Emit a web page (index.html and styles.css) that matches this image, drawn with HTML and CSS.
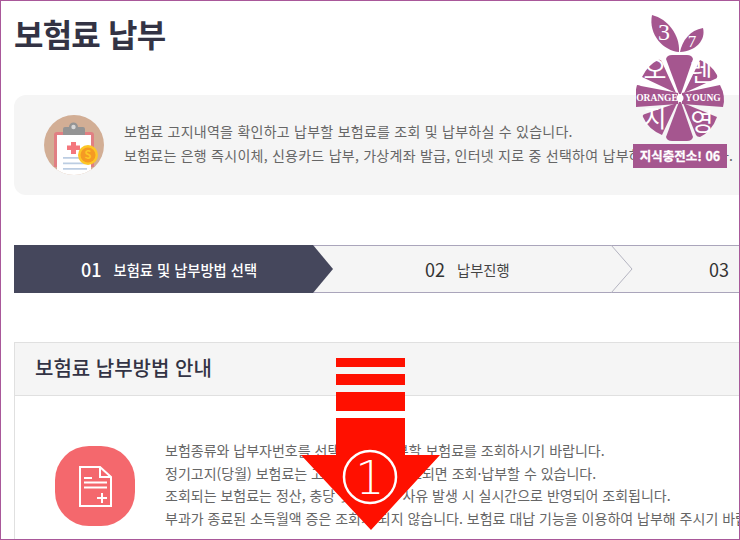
FILE: index.html
```html
<!DOCTYPE html>
<html lang="ko">
<head>
  <meta charset="UTF-8" />
  <title>보험료 납부</title>
  <link rel="stylesheet" href="styles.css">
</head>
<body>
  <div class="frame">
    <h1 class="page-title">보험료 납부</h1>

    <div class="intro">
      <svg class="intro-icon" width="60" height="60" viewBox="0 0 60 60">
        <clipPath id="disc"><circle cx="30" cy="30" r="30"/></clipPath>
        <circle cx="30" cy="30" r="30" fill="#d2ae95"/>
        <g clip-path="url(#disc)">
          <path d="M10 52V20a3 3 0 0 1 3-3h34a3 3 0 0 1 3 3v32z" fill="#e17f83"/>
          <rect x="13" y="20" width="34" height="42" fill="#fff"/>
        </g>
        <path d="M19 20v-6a2 2 0 0 1 2-2h4a4.500 4.500 0 0 1 9 0h5a2 2 0 0 1 2 2v6z" fill="#949494"/>
        <circle cx="29.500" cy="12" r="2.200" fill="#d8d8d8"/>
        <path d="M27 27h5v3.500h4v4.500h-4v4h-5v-4h-4v-4.500h4z" fill="#f4777d"/>
        <path d="M19 42h20v1.800H19zM19 47.500h24v1.800H19zM19 53h24v1.800H19z" fill="#bccde2"/>
        <circle cx="44" cy="40" r="10" fill="#fdc726"/>
        <circle cx="44" cy="40" r="7.500" fill="#f59a23"/>
        <text class="coin" x="44" y="44" text-anchor="middle">S</text>
      </svg>
      <div class="intro-text">
        <p>보험료 고지내역을 확인하고 납부할 보험료를 조회 및 납부하실 수 있습니다.</p>
        <p>보험료는 은행 즉시이체, 신용카드 납부, 가상계좌 발급, 인터넷 지로 중 선택하여 납부하실 수 있습니다.</p>
      </div>
    </div>

    <div class="steps">
      <div class="step step-on"><b>01</b><span>보험료 및 납부방법 선택</span></div>
      <svg class="step-tip" width="20" height="48" viewBox="0 0 20 48"><polygon points="0,0 20,24 0,48" fill="#45475c"/></svg>
      <div class="step step-two"><b>02</b><span>납부진행</span></div>
      <svg class="step-tip" width="22" height="48" viewBox="0 0 22 48"><polyline points="0,0 21,24 0,48" fill="none" stroke="#b4b4c0"/></svg>
      <div class="step step-three"><b>03</b></div>
    </div>

    <div class="card">
      <h2 class="card-head">보험료 납부방법 안내</h2>
      <div class="card-body">
        <div class="doc-badge">
          <svg width="33" height="41" viewBox="0 0 33 41" fill="none" stroke="#fff" stroke-width="2">
            <path d="M1 1h20l11 10v29H1z"/>
            <path d="M21 1v10h11"/>
            <path d="M5 12h8M5 16.500h23M5 21.500h23M18 32h10M23 27v10"/>
          </svg>
        </div>
        <div class="card-text">
          <p>보험종류와 납부자번호를 선택하시고 납부할 보험료를 조회하시기 바랍니다.</p>
          <p>정기고지(당월) 보험료는 고지서가 발송 완료되면 조회·납부할 수 있습니다.</p>
          <p>조회되는 보험료는 정산, 충당 및 환불 등 사유 발생 시 실시간으로 반영되어 조회됩니다.</p>
          <p>부과가 종료된 소득월액 증은 조회가 되지 않습니다. 보험료 대납 기능을 이용하여 납부해 주시기 바랍니다.</p>
        </div>
      </div>
    </div>

    <svg class="logo" width="100" height="130" viewBox="0 0 100 130">
      <g fill="#a5568f">
        <path d="M16 0C32 4 44 20 43 37C28 36 12 20 16 0z"/>
        <path d="M67 13C70 25 60 36 44 37C46 26 54 15 67 13z"/>
        <path d="M30 44Q31 40 36 40H51Q56 40 57 44L45 79H43z"/>
        <path d="M64 45Q76 50 81 60Q82 63 79 64L48 78z"/>
        <path d="M84 70Q90 81 87 92L46 89V78z"/>
        <path d="M81 102Q76 116 64 122Q61 122 60 120L47 88z"/>
        <path d="M57 122Q56 126 51 126H36Q31 126 30 122L43 87H45z"/>
        <path d="M26 120Q12 114 7 102Q6 100 9 99L41 88z"/>
        <path d="M0 92Q-2 81 1 70Q3 70 5 71L42 78V89z"/>
        <path d="M6 62Q12 50 22 45Q25 44 26 47L40 78z"/>
      </g>
      <g class="logo-kr" fill="#fff" text-anchor="middle">
        <text class="logo-num" x="28" y="25">3</text>
        <text class="logo-num small" x="56" y="32">7</text>
        <text x="19" y="64">오</text>
        <text x="65" y="66">렌</text>
        <text x="19" y="112">지</text>
        <text x="66" y="116">영</text>
      </g>
      <circle cx="44" cy="83" r="3.500" fill="#fff"/>
      <text class="logo-en" x="21" y="86" text-anchor="middle">ORANGE</text>
      <text class="logo-en" x="67" y="86" text-anchor="middle">YOUNG</text>
    </svg>
    <div class="logo-tag">지식충전소! 06</div>

    <svg class="arrow" width="144" height="176" viewBox="0 0 144 176">
      <g fill="#ff1000">
        <path d="M37 0h69v9H37zM37 16h69v11H37zM37 34h69v19H37z"/>
        <path d="M37 60h69v37h35L72 172L2 97h35z"/>
      </g>
      <circle cx="71" cy="119" r="26" fill="none" stroke="#fff" stroke-width="2.500"/>
      <text class="arrow-num" x="71" y="136" text-anchor="middle">1</text>
    </svg>
  </div>
</body>
</html>
```

FILE: styles.css
```css
* { box-sizing: border-box; margin: 0; padding: 0; }
html, body {
  width: 100%;
  height: 100%;
  background: #fff;
  font-family: "Noto Sans CJK KR", "Noto Sans", sans-serif;
  color: #666;
}
.frame {
  position: relative;
  width: 740px;
  height: 540px;
  border: 1px solid #a9589a;
  padding: 0 0 0 13px;
  overflow: hidden;
}
.page-title {
  height: 94px;
  padding-top: 9px;
  font-size: 32px;
  line-height: 46px;
  font-weight: 700;
  letter-spacing: -0.8px;
  color: #333344;
}
.intro {
  display: flex;
  align-items: center;
  gap: 20px;
  width: 760px;
  height: 100px;
  padding-left: 30px;
  background: #f5f5f5;
  border-radius: 12px;
}
.intro-icon { flex: none; }
.intro-text {
  padding-bottom: 4px;
  font-size: 14px;
  line-height: 24px;
  letter-spacing: 0.25px;
  white-space: nowrap;
}
.coin { font-size: 11px; font-weight: 700; fill: #fdc726; }

.steps {
  display: flex;
  width: 740px;
  height: 48px;
  margin-top: 50px;
  background: #f5f5f5;
  border-top: 1px solid #aaa5bb;
  border-bottom: 1px solid #aaa5bb;
}
.step {
  display: flex;
  align-items: center;
  flex: none;
  gap: 12px;
  height: 46px;
  font-size: 14.300px;
  color: #444;
  white-space: nowrap;
}
.step b { font-size: 18px; font-weight: 400; color: #333; }
.step-on {
  width: 299px;
  height: 48px;
  margin-top: -1px;
  padding-left: 67px;
  background: #45475c;
  color: #fff;
  font-weight: 500;
}
.step-on b { color: #fff; font-weight: 500; }
.step-tip { flex: none; margin-top: -1px; }
.step-two { width: 278px; padding-left: 92px; }
.step-three { padding-left: 76px; }

.card {
  width: 760px;
  height: 300px;
  margin-top: 49px;
  border: 1px solid #e0e0e0;
}
.card-head {
  height: 53px;
  padding-left: 20px;
  background: #f5f5f5;
  border-bottom: 1px solid #e0e0e0;
  font-size: 20px;
  line-height: 50px;
  font-weight: 500;
  color: #333344;
}
.card-body {
  display: flex;
  gap: 30px;
  padding: 43px 0 0 40px;
}
.doc-badge {
  display: flex;
  align-items: center;
  justify-content: center;
  flex: none;
  width: 80px;
  height: 80px;
  margin-top: 7px;
  background: #f4686d;
  border-radius: 34px;
}
.card-text {
  font-size: 14px;
  line-height: 22.500px;
  white-space: nowrap;
}

.logo { position: absolute; top: 14px; left: 635px; }
.logo-kr { font-size: 25px; }
.logo-num { font-family: "Liberation Serif", serif; font-size: 24px; }
.logo-num.small { font-size: 17px; }
.logo-en {
  font-family: "Liberation Serif", serif;
  font-size: 9.500px;
  font-weight: 700;
  fill: #fff;
}
.logo-tag {
  position: absolute;
  top: 143px;
  left: 632px;
  width: 94px;
  height: 24px;
  background: #a5568f;
  color: #fff;
  font-size: 12.500px;
  font-weight: 700;
  -webkit-text-stroke: 0.3px #fff;
  line-height: 24px;
  text-align: center;
  white-space: nowrap;
}
.arrow { position: absolute; top: 357px; left: 298px; }
.arrow-num {
  font-family: "DejaVu Sans", sans-serif;
  font-size: 46px;
  font-weight: 200;
  fill: #fff;
}
```
